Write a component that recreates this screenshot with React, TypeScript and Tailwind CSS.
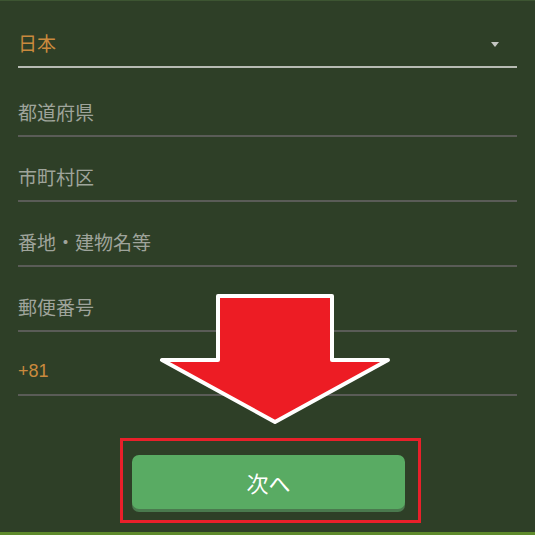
const fields = [
  { label: "都道府県", h: "h-[69px]" },
  { label: "市町村区", h: "h-[65px]" },
  { label: "番地・建物名等", h: "h-[65px]" },
  { label: "郵便番号", h: "h-[65px]" },
];

export default function App() {
  return (
    <div
      className="relative w-[535px] h-[535px] overflow-hidden bg-[#2e3f27] border-t border-[#3d5532] flex flex-col"
      style={{ fontFamily: '"Noto Sans CJK JP", "Noto Sans", sans-serif' }}
    >
      <div className="px-[18px]">
        {/* Country select */}
        <div className="h-[67px] flex items-end justify-between pb-[10px] border-b-2 border-[#b7bbb3]">
          <span className="text-[19px] leading-[26px] text-[#c98a3d]">日本</span>
          <span className="mr-[18px] mb-[9px] w-0 h-0 border-l-[4px] border-r-[4px] border-t-[5px] border-l-transparent border-r-transparent border-t-[#c4c6c2]" />
        </div>

        {fields.map((f) => (
          <div
            key={f.label}
            className={`${f.h} flex items-end pb-[10px] border-b-2 border-[#5a5c57]`}
          >
            <span className="text-[19px] leading-[26px] text-[#9fa49b]">{f.label}</span>
          </div>
        ))}

        {/* Phone */}
        <div className="h-[64px] flex items-end pb-[10px] border-b-2 border-[#5a5c57]">
          <span className="text-[18px] leading-[26px] text-[#c98a3d]" style={{ fontFamily: '"Liberation Sans", sans-serif' }}>
            +81
          </span>
        </div>
      </div>

      {/* Next button highlighted */}
      <div className="flex justify-center pl-[6px] mt-[42px]">
        <div className="w-[301px] h-[85px] border-[3px] border-[#e8202a] px-[9px] pt-[14px]">
          <button className="w-[273px] h-[54px] rounded-[7px] bg-[#59ab63] shadow-[0_3px_0_#4a7a4e] text-white text-[22px] leading-none flex items-center justify-center">
            次へ
          </button>
        </div>
      </div>

      <div className="mt-auto h-[3px] bg-[#5e8a2b]" />

      {/* Pointer arrow */}
      <svg className="absolute left-0 top-0" width="535" height="535" viewBox="0 0 535 535">
        <polygon
          points="218,295 332,295 332,359 388,359 275,421 162,359 218,359"
          fill="#ed1c24"
          stroke="#ffffff"
          strokeWidth="4"
          strokeLinejoin="round"
        />
      </svg>
    </div>
  );
}
